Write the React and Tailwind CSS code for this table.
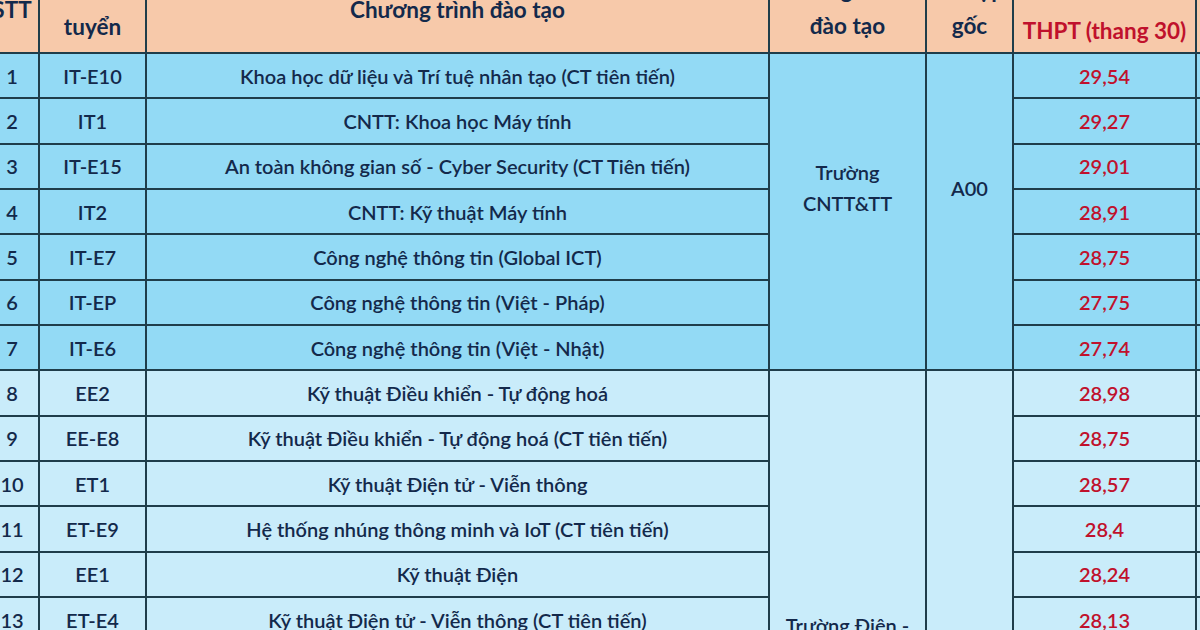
import React from 'react';

const itRows = [
  ['1', 'IT-E10', 'Khoa học dữ liệu và Trí tuệ nhân tạo (CT tiên tiến)', '29,54'],
  ['2', 'IT1', 'CNTT: Khoa học Máy tính', '29,27'],
  ['3', 'IT-E15', 'An toàn không gian số - Cyber Security (CT Tiên tiến)', '29,01'],
  ['4', 'IT2', 'CNTT: Kỹ thuật Máy tính', '28,91'],
  ['5', 'IT-E7', 'Công nghệ thông tin (Global ICT)', '28,75'],
  ['6', 'IT-EP', 'Công nghệ thông tin (Việt - Pháp)', '27,75'],
  ['7', 'IT-E6', 'Công nghệ thông tin (Việt - Nhật)', '27,74'],
];

const eeRows = [
  ['8', 'EE2', 'Kỹ thuật Điều khiển - Tự động hoá', '28,98'],
  ['9', 'EE-E8', 'Kỹ thuật Điều khiển - Tự động hoá (CT tiên tiến)', '28,75'],
  ['10', 'ET1', 'Kỹ thuật Điện tử - Viễn thông', '28,57'],
  ['11', 'ET-E9', 'Hệ thống nhúng thông minh và IoT (CT tiên tiến)', '28,4'],
  ['12', 'EE1', 'Kỹ thuật Điện', '28,24'],
  ['13', 'ET-E4', 'Kỹ thuật Điện tử - Viễn thông (CT tiên tiến)', '28,13'],
  ['14', 'ET-E16', 'Truyền thông số và Kỹ thuật đa phương tiện (CT tiên tiến)', '27,95'],
  ['15', 'EE-E18', 'Hệ thống điện và năng lượng tái tạo (CT tiên tiến)', '27,6'],
  ['16', 'ET-E5', 'Kỹ thuật Y sinh (CT tiên tiến)', '27,4'],
  ['17', 'ET2', 'Kỹ thuật Y sinh', '27,3'],
  ['18', 'EE-EP', 'Tin học công nghiệp và Tự động hoá (Việt - Pháp)', '27,1'],
  ['19', 'ET-LUH', 'Điện tử - Viễn thông (ĐH Leibniz Hannover)', '25,5'],
  ['20', 'EE-E18', 'Hệ thống điện (CT tiên tiến)', '25,2'],
];

const cell = 'border-2 border-[#1f3d4a] text-center align-middle';

function Group({ rows, bg, school }) {
  return rows.map((r, i) => (
    <tr key={r[0]} className={`h-[45.33px] ${bg}`}>
      <td className={cell}>{r[0]}</td>
      <td className={cell}>{r[1]}</td>
      <td className={cell}>{r[2]}</td>
      {i === 0 && (
        <td rowSpan={rows.length} className={`${cell} pb-[48px] leading-[31px]`}>
          {school[0]}
          <br />
          {school[1]}
        </td>
      )}
      {i === 0 && (
        <td rowSpan={rows.length} className={`${cell} pb-[48px]`}>
          A00
        </td>
      )}
      <td className={`${cell} text-[#c0112c]`}>{r[3]}</td>
      <td className={cell}></td>
    </tr>
  ));
}

export default function App() {
  return (
    <div className="w-[1200px] h-[630px] overflow-hidden bg-white">
      <table className="table-fixed border-collapse -mt-[32px] -ml-[16px] w-[1251px] font-['Lato','Noto_Sans',sans-serif] text-[20px] font-semibold text-[#13294b]">
        <colgroup>
          <col className="w-[54px]" />
          <col className="w-[107px]" />
          <col className="w-[623px]" />
          <col className="w-[157px]" />
          <col className="w-[87px]" />
          <col className="w-[183px]" />
          <col className="w-[40px]" />
        </colgroup>
        <thead>
          <tr className="h-[84px] bg-[#f7c9aa] leading-[36px] text-[22.5px]">
            <th className={`${cell} font-bold pb-[2px]`}>STT</th>
            <th className={`${cell} font-bold pb-[4px]`}>
              Mã xét
              <br />
              tuyển
            </th>
            <th className={`${cell} font-bold pb-[2px]`}>Chương trình đào tạo</th>
            <th className={`${cell} font-bold pb-[6px]`}>
              Trường/Khoa
              <br />
              đào tạo
            </th>
            <th className={`${cell} font-bold pb-[6px]`}>
              Tổ hợp
              <br />
              gốc
            </th>
            <th className={`${cell} font-bold text-[#c0112c] leading-[40px]`}>
              Điểm chuẩn
              <br />
              THPT (thang 30)
            </th>
            <th className={cell}></th>
          </tr>
        </thead>
        <tbody>
          <Group rows={itRows} bg="bg-[#93daf5]" school={['Trường', 'CNTT&TT']} />
          <Group rows={eeRows} bg="bg-[#c9ecfa]" school={['Trường Điện -', 'Điện tử']} />
        </tbody>
      </table>
    </div>
  );
}
